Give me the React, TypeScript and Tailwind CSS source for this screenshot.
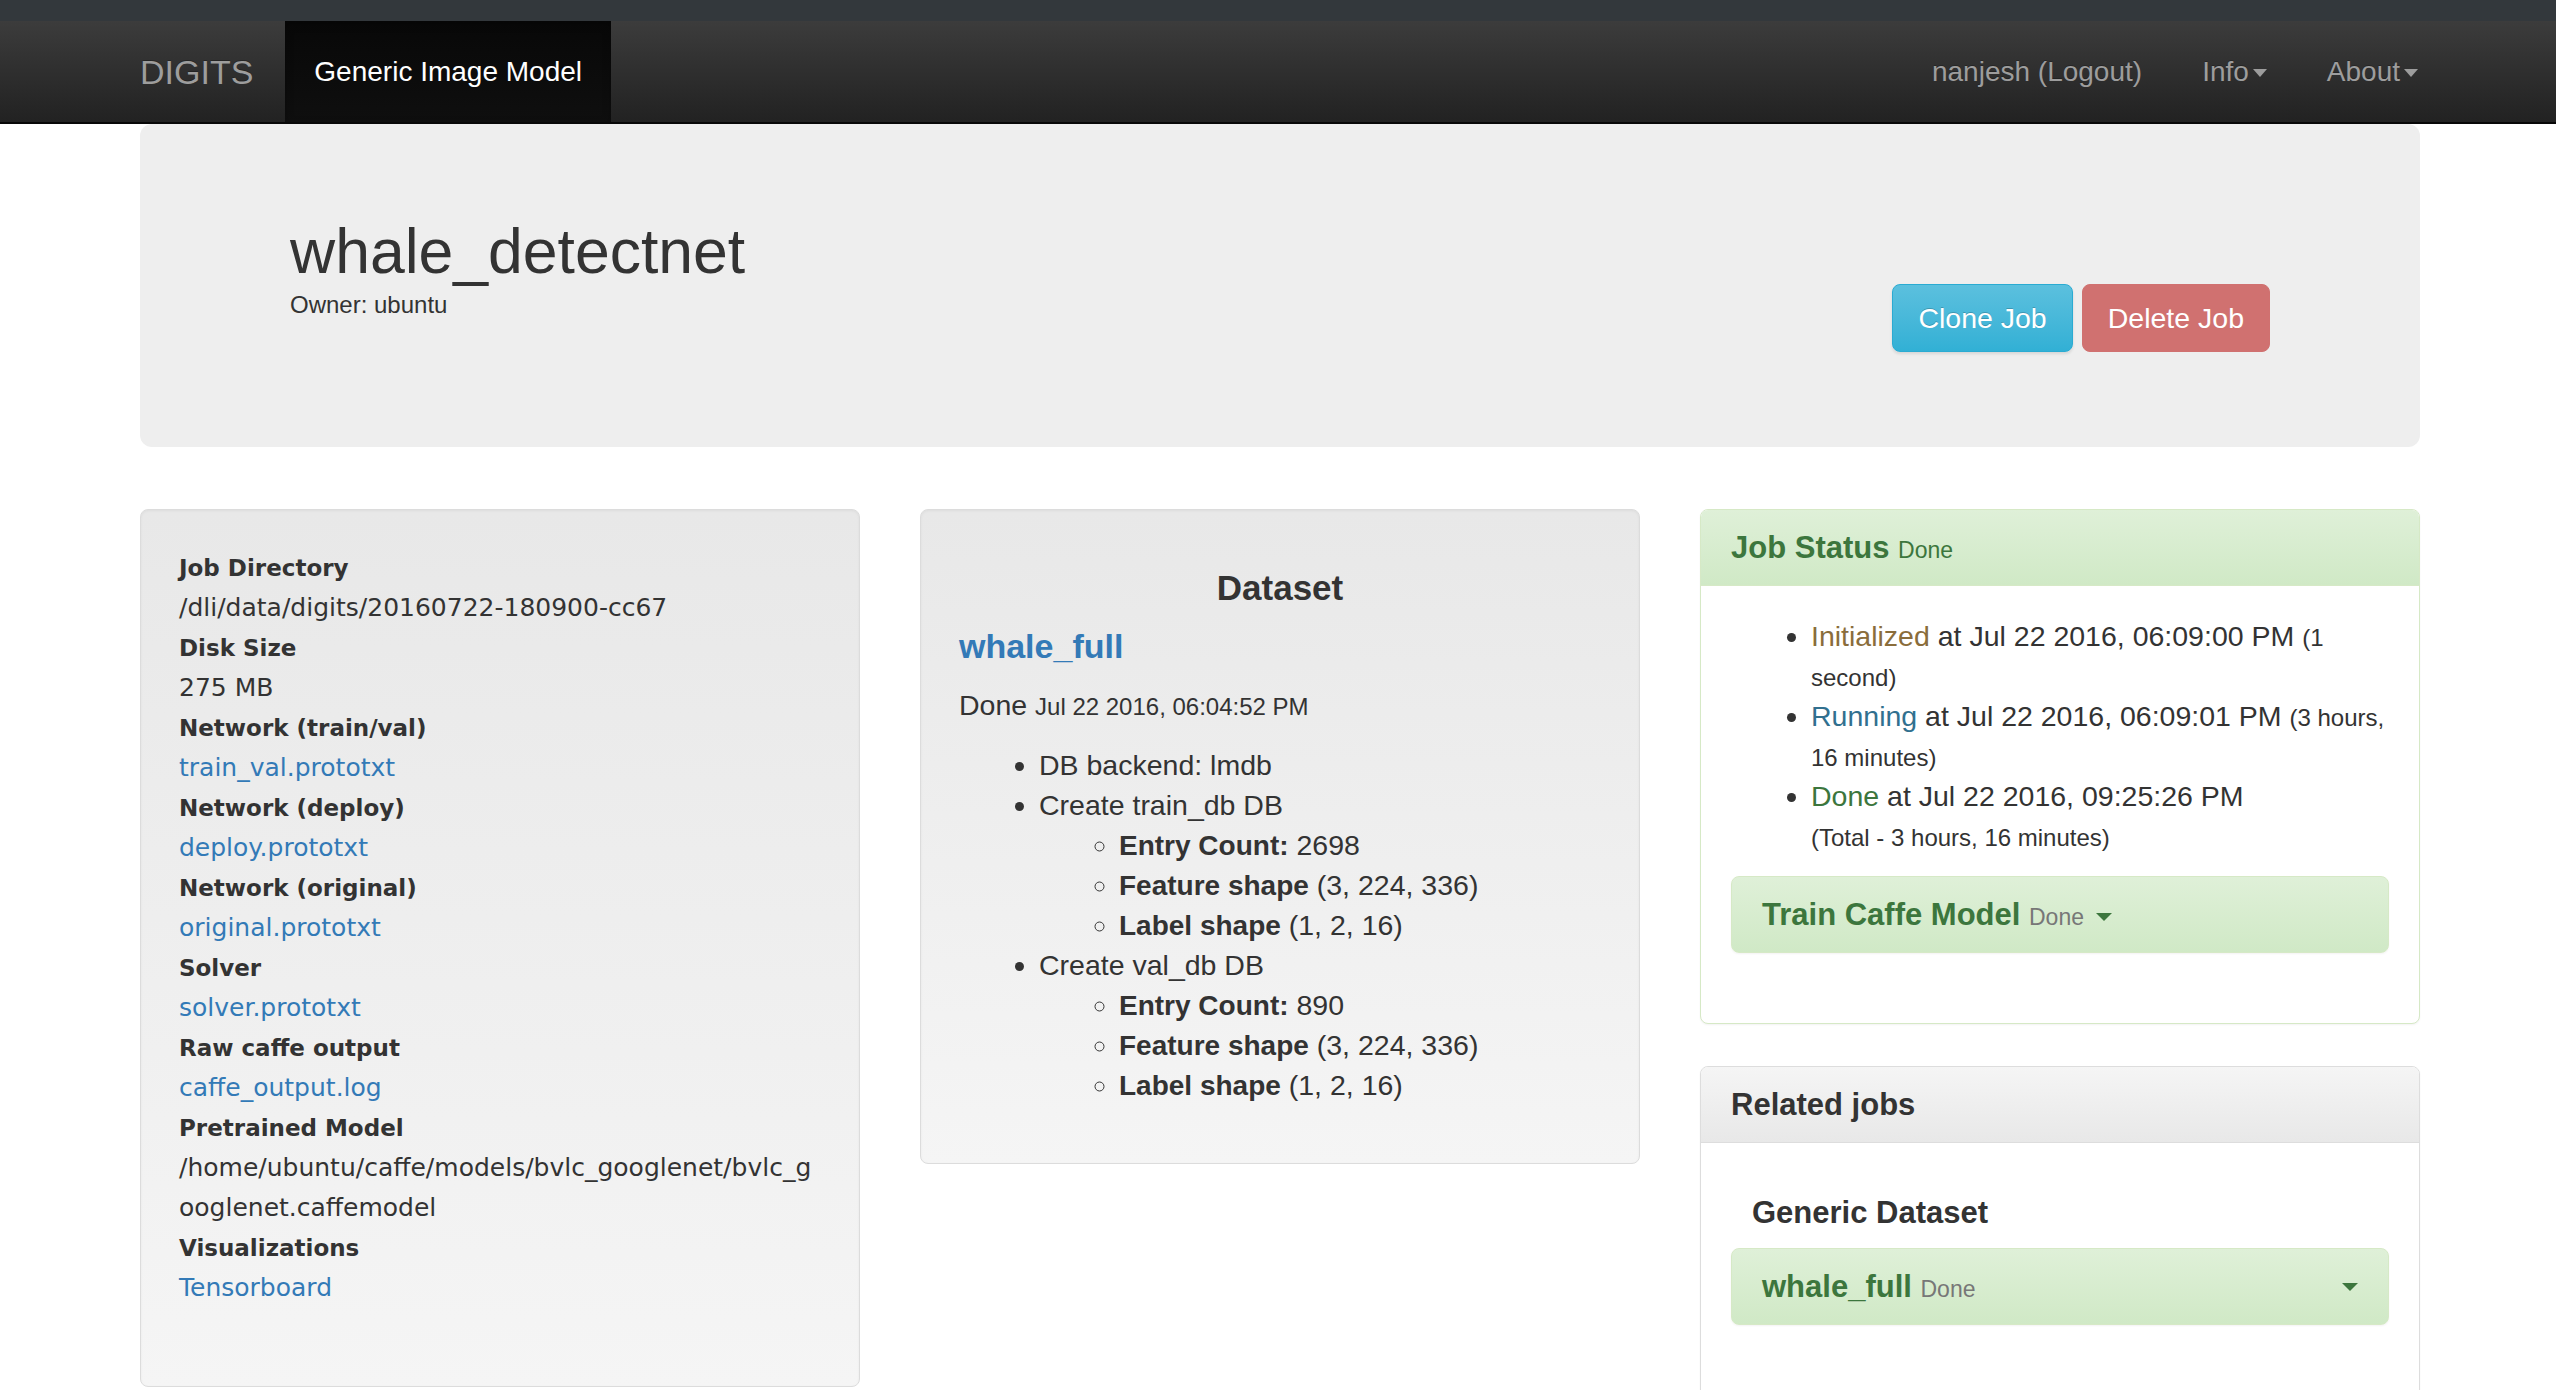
import React from 'react';

function Caret({ className }: { className: string }) {
  return <span className={`inline-block h-0 w-0 border-x-transparent align-middle ${className}`} />;
}

const wellCls =
  "rounded-[8px] border border-[#dcdcdc] bg-linear-to-b from-[#e8e8e8] to-[#f5f5f5] p-[38px] shadow-[inset_0_1px_3px_rgba(0,0,0,0.05)]";

const greenBox =
  "rounded-[8px] border border-[#d6e9c6] bg-linear-to-b from-[#dff0d8] to-[#d0e9c6] shadow-[0_1px_2px_rgba(0,0,0,0.05)]";

const jobInfo: { label: string; value: string; link?: boolean; wrap?: boolean }[] = [
  { label: 'Job Directory', value: '/dli/data/digits/20160722-180900-cc67' },
  { label: 'Disk Size', value: '275 MB' },
  { label: 'Network (train/val)', value: 'train_val.prototxt', link: true },
  { label: 'Network (deploy)', value: 'deploy.prototxt', link: true },
  { label: 'Network (original)', value: 'original.prototxt', link: true },
  { label: 'Solver', value: 'solver.prototxt', link: true },
  { label: 'Raw caffe output', value: 'caffe_output.log', link: true },
  { label: 'Pretrained Model', value: '/home/ubuntu/caffe/models/bvlc_googlenet/bvlc_googlenet.caffemodel', wrap: true },
  { label: 'Visualizations', value: 'Tensorboard', link: true },
];

function DbStats({ count }: { count: number }) {
  return (
    <ul className="list-[circle] pl-[80px]">
      <li><b className="text-[28px] leading-none">Entry Count:</b> {count}</li>
      <li><b className="text-[28px] leading-none">Feature shape</b> (3, 224, 336)</li>
      <li><b className="text-[28px] leading-none">Label shape</b> (1, 2, 16)</li>
    </ul>
  );
}

export default function App() {
  return (
    <div className="min-h-screen bg-white pb-[200px] font-['Liberation_Sans',Helvetica,Arial,sans-serif] text-[28.5px] leading-[40px] text-[#333]">
      <div className="h-[21px] bg-[#33383c]" />

      {/* navbar */}
      <nav className="h-[103px] border-b-2 border-[#080808] bg-linear-to-b from-[#3c3c3c] to-[#222]">
        <div className="ml-[140px] flex h-full w-[2280px] items-stretch">
          <a className="flex items-center pr-[32px] text-[34px] text-[#9d9d9d] [text-shadow:0_-1px_0_rgba(0,0,0,0.25)]">DIGITS</a>
          <a className="flex items-center bg-linear-to-b from-[#080808] to-[#0f0f0f] px-[29px] text-[28px] text-white shadow-[inset_0_3px_9px_rgba(0,0,0,0.25)]">
            Generic Image Model
          </a>
          <div className="ml-auto mr-[2px] flex items-center gap-[60px] text-[28px] text-[#9d9d9d] [text-shadow:0_-1px_0_rgba(0,0,0,0.25)]">
            <span>nanjesh (Logout)</span>
            <span>Info<Caret className="ml-[4px] border-x-[7px] border-t-[8px] border-t-[#9d9d9d]" /></span>
            <span>About<Caret className="ml-[4px] border-x-[7px] border-t-[8px] border-t-[#9d9d9d]" /></span>
          </div>
        </div>
      </nav>

      {/* jumbotron */}
      <div className="ml-[140px] flex h-[323px] w-[2280px] justify-between rounded-[12px] bg-[#eee] px-[150px] pt-[93px]">
        <div>
          <h1 className="text-[62.5px] leading-[68px]">whale_detectnet</h1>
          <p className="mt-[3px] text-[24px] leading-[34px]">Owner: ubuntu</p>
        </div>
        <div className="mt-[67px] flex h-[68px] gap-[9px]">
          <button className="rounded-[8px] border border-[#2aabd2] bg-linear-to-b from-[#5bc0de] to-[#31b0d5] px-[25px] text-white shadow-[0_2px_3px_rgba(0,0,0,0.1)] [text-shadow:0_-1px_0_rgba(0,0,0,0.2)]">
            Clone Job
          </button>
          <button className="rounded-[8px] border border-[#d07170] bg-[#d07170] px-[25px] text-white">Delete Job</button>
        </div>
      </div>

      {/* columns */}
      <div className="ml-[140px] mt-[62px] grid w-[2280px] grid-cols-3 items-start gap-x-[60px]">
        <div className={`${wellCls} font-['DejaVu_Sans',Verdana,sans-serif] text-[25px]`}>
          <dl className="mb-[40px]">
            {jobInfo.map((r) => (
              <React.Fragment key={r.label}>
                <dt className="text-[23px] font-bold">{r.label}</dt>
                <dd className={`${r.link ? 'text-[#337ab7]' : ''} ${r.wrap ? 'break-all' : ''}`}>{r.value}</dd>
              </React.Fragment>
            ))}
          </dl>
        </div>

        <div className={wellCls}>
          <h4 className="mt-[20px] text-center text-[35px] font-bold leading-[40px]">Dataset</h4>
          <h4 className="mt-[18px] text-[34px] font-bold leading-[40px] text-[#337ab7]">whale_full</h4>
          <p className="mt-[19px]">
            Done <small className="text-[24px] leading-none">Jul 22 2016, 06:04:52 PM</small>
          </p>
          <ul className="mb-[20px] mt-[20px] list-disc pl-[80px]">
            <li>DB backend: lmdb</li>
            <li>
              Create train_db DB
              <DbStats count={2698} />
            </li>
            <li>
              Create val_db DB
              <DbStats count={890} />
            </li>
          </ul>
        </div>

        <div className="flex flex-col gap-[42px]">
          <div className="overflow-hidden rounded-[8px] border border-[#d6e9c6] bg-white shadow-[0_1px_2px_rgba(0,0,0,0.05)]">
            <div className="border-b border-[#d6e9c6] bg-linear-to-b from-[#dff0d8] to-[#d0e9c6] px-[30px] py-[20px] text-[#3c763d]">
              <h3 className="text-[31px] font-bold leading-[35px]">
                Job Status <small className="text-[23px] font-normal leading-none">Done</small>
              </h3>
            </div>
            <div className="p-[30px]">
              <ul className="mb-[20px] list-disc pl-[80px]">
                <li>
                  <span className="text-[#8a6d3b]">Initialized</span> at Jul 22 2016, 06:09:00 PM{' '}
                  <small className="text-[24px] leading-none">(1 second)</small>
                </li>
                <li>
                  <span className="text-[#31708f]">Running</span> at Jul 22 2016, 06:09:01 PM{' '}
                  <small className="text-[24px] leading-none">(3 hours, 16 minutes)</small>
                </li>
                <li>
                  <span className="text-[#3c763d]">Done</span> at Jul 22 2016, 09:25:26 PM
                  <br />
                  <small className="text-[24px] leading-none">(Total - 3 hours, 16 minutes)</small>
                </li>
              </ul>
              <div className={`${greenBox} mb-[40px] px-[30px] py-[20px]`}>
                <h4 className="text-[31px] font-bold leading-[35px] text-[#3c763d]">
                  Train Caffe Model <small className="text-[23px] font-normal leading-none text-[#777]">Done</small>
                  <Caret className="ml-[12px] border-x-[8px] border-t-[8px] border-t-[#3c763d]" />
                </h4>
              </div>
            </div>
          </div>

          <div className="overflow-hidden rounded-[8px] border border-[#ddd] bg-white shadow-[0_1px_2px_rgba(0,0,0,0.05)]">
            <div className="border-b border-[#ddd] bg-linear-to-b from-[#f5f5f5] to-[#e8e8e8] px-[30px] py-[20px]">
              <h3 className="text-[31px] font-bold leading-[35px]">Related jobs</h3>
            </div>
            <div className="p-[30px]">
              <h4 className="mb-[15px] ml-[21px] mt-[20px] text-[31px] font-bold leading-[40px]">Generic Dataset</h4>
              <div className={`${greenBox} flex items-center justify-between px-[30px] py-[20px]`}>
                <h4 className="text-[31px] font-bold leading-[35px] text-[#3c763d]">
                  whale_full <small className="text-[23px] font-normal leading-none text-[#777]">Done</small>
                </h4>
                <Caret className="border-x-[8px] border-t-[8px] border-t-[#3c763d]" />
              </div>
              <div className="h-[200px]" />
            </div>
          </div>
        </div>
      </div>
    </div>
  );
}
